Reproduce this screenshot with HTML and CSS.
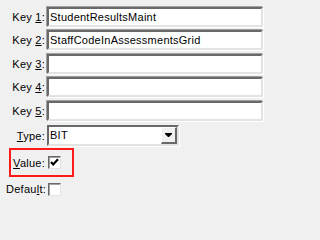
FILE: index.html
```html
<!DOCTYPE html>
<html>
<head>
<meta charset="utf-8">
<link rel="stylesheet" href="styles.css">
</head>
<body>
<div class="form">
  <div class="row">
    <span class="label">Key <u>1</u>:</span>
    <div class="field">StudentResultsMaint</div>
  </div>
  <div class="row gap3">
    <span class="label">Key <u>2</u>:</span>
    <div class="field">StaffCodeInAssessmentsGrid</div>
  </div>
  <div class="row gap4">
    <span class="label">Key <u>3</u>:</span>
    <div class="field"></div>
  </div>
  <div class="row gap3">
    <span class="label">Key <u>4</u>:</span>
    <div class="field"></div>
  </div>
  <div class="row gap4">
    <span class="label">Key <u>5</u>:</span>
    <div class="field"></div>
  </div>
  <div class="row gap4 combo-row">
    <span class="label"><u>T</u>ype:</span>
    <div class="combo">
      <span class="combo-text">BIT</span>
      <span class="combo-btn">
        <svg width="7" height="5" viewBox="0 0 7 5"><path d="M0 0H7V1L4 4H3L0 1Z" fill="#000"/></svg>
      </span>
    </div>
  </div>
  <div class="highlight">
    <span class="label short"><u>V</u>alue:</span>
    <span class="check">
      <svg width="9" height="9" viewBox="0 0 9 9"><path d="M1 4L3.2 6.4L8 1.2" fill="none" stroke="#000" stroke-width="2.2"/></svg>
    </span>
  </div>
  <div class="row check-row">
    <span class="label label-def">Defau<u>l</u>t:</span>
    <span class="check"></span>
  </div>
</div>
</body>
</html>
```
FILE: styles.css
```css
html, body {
  margin: 0;
  padding: 0;
  background: #f0f0f0;
}
body {
  width: 268px;
  height: 200px;
  overflow: hidden;
  font-family: "Liberation Sans", Arial, sans-serif;
  font-size: 11px;
  letter-spacing: 0.25px;
  color: #000;
}
.form {
  padding-top: 7px;
  display: flex;
  flex-direction: column;
}
.row {
  display: flex;
  align-items: center;
  height: 20px;
}
.gap3 { margin-top: 3px; }
.gap4 { margin-top: 4px; }
.label {
  width: 45px;
  text-align: right;
  white-space: nowrap;
  flex: none;
}
.label u {
  text-decoration: underline;
  text-underline-offset: 1px;
}
.field {
  margin-left: 2px;
  width: 216px;
  height: 20px;
  box-sizing: border-box;
  background: #fff;
  border-style: solid;
  border-width: 2px;
  border-color: #696969 #e3e3e3 #e3e3e3 #696969;
  box-shadow: -1px -1px 0 0 #a0a0a0, 1px 1px 0 0 #fff;
  padding: 0 1px;
  line-height: 16px;
  white-space: nowrap;
  overflow: hidden;
}
.combo-row { height: 21px; }
.combo {
  margin-left: 2px;
  width: 132px;
  height: 21px;
  box-sizing: border-box;
  background: #fff;
  border-style: solid;
  border-width: 2px;
  border-color: #696969 #e3e3e3 #e3e3e3 #696969;
  box-shadow: 1px 1px 0 0 #fff;
  display: flex;
  align-items: stretch;
}
.combo-text {
  flex: 1;
  padding-left: 1px;
  line-height: 17px;
}
.combo-btn {
  width: 16px;
  box-sizing: border-box;
  background: #f0f0f0;
  border-style: solid;
  border-width: 1px 2px 2px 1px;
  border-color: #fff #696969 #696969 #fff;
  display: flex;
  align-items: center;
  justify-content: center;
}
.highlight {
  margin-top: 2px;
  margin-left: 9px;
  width: 65px;
  height: 29px;
  box-sizing: border-box;
  border: 2px solid #ff1a1a;
  display: flex;
  align-items: center;
}
.label.short {
  width: 34px;
}
.check {
  margin-left: 3px;
  width: 13px;
  height: 13px;
  box-sizing: border-box;
  background: #fff;
  border-style: solid;
  border-width: 1px;
  border-color: #696969 #e3e3e3 #e3e3e3 #696969;
  box-shadow: inset 1px 1px 0 0 #a0a0a0;
  display: flex;
  align-items: center;
  justify-content: center;
  flex: none;
}
.check-row {
  margin-top: 4px;
  height: 16px;
}
.label-def {
  width: 46px;
}
.check-row .check {
  margin-left: 2px;
}
```
